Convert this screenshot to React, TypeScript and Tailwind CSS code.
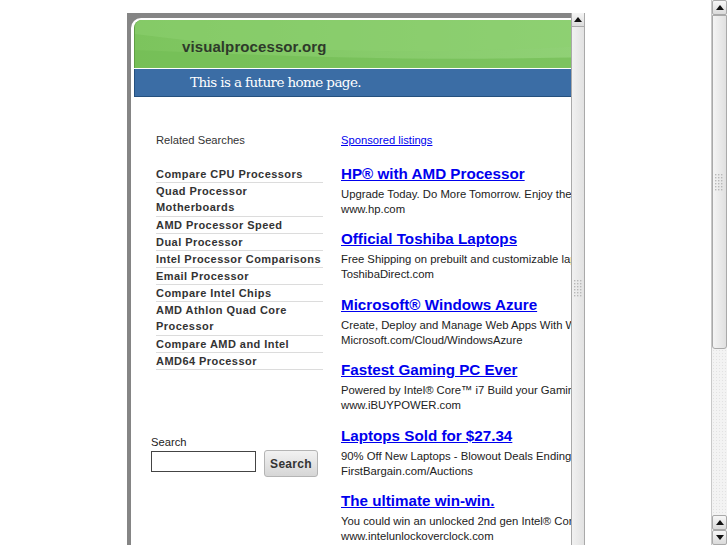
import React from "react";

const related: string[][] = [
  ["Compare CPU Processors"],
  ["Quad Processor", "Motherboards"],
  ["AMD Processor Speed"],
  ["Dual Processor"],
  ["Intel Processor Comparisons"],
  ["Email Processor"],
  ["Compare Intel Chips"],
  ["AMD Athlon Quad Core", "Processor"],
  ["Compare AMD and Intel"],
  ["AMD64 Processor"],
];

const ads = [
  { t: "HP® with AMD Processor", d: "Upgrade Today. Do More Tomorrow. Enjoy the Power of AMD", u: "www.hp.com" },
  { t: "Official Toshiba Laptops", d: "Free Shipping on prebuilt and customizable laptops", u: "ToshibaDirect.com" },
  { t: "Microsoft® Windows Azure", d: "Create, Deploy and Manage Web Apps With Windows Azure", u: "Microsoft.com/Cloud/WindowsAzure" },
  { t: "Fastest Gaming PC Ever", d: "Powered by Intel® Core™ i7 Build your Gaming PC now", u: "www.iBUYPOWER.com" },
  { t: "Laptops Sold for $27.34", d: "90% Off New Laptops - Blowout Deals Ending Soon", u: "FirstBargain.com/Auctions" },
  { t: "The ultimate win-win.", d: "You could win an unlocked 2nd gen Intel® Core™ processor", u: "www.intelunlockoverclock.com" },
];

function Up() {
  return (
    <svg width="8" height="5" viewBox="0 0 8 5">
      <path d="M0 5 L4 0 L8 5 Z" fill="#111" />
    </svg>
  );
}
function Down() {
  return (
    <svg width="8" height="5" viewBox="0 0 8 5">
      <path d="M0 0 L4 5 L8 0 Z" fill="#111" />
    </svg>
  );
}

function Grip({ w }: { w: number }) {
  return (
    <svg width={w} height="18" viewBox={`0 0 ${w} 18`}>
      {Array.from({ length: 6 }).map((_, r) =>
        Array.from({ length: 3 }).map((__, c) => (
          <rect key={`${r}-${c}`} x={c * 3 + 1} y={r * 3 + 1} width="1.4" height="1.4" fill="#b8b8b8" />
        ))
      )}
    </svg>
  );
}

export default function App() {
  return (
    <div
      className="w-[727px] h-[545px] overflow-hidden bg-white flex text-[#333]"
      style={{ fontFamily: '"Liberation Sans", Arial, sans-serif' }}
    >
      <div className="w-[127px] shrink-0" />
      <div className="w-[458px] shrink-0 flex flex-col">
        <div className="h-[13px] shrink-0" />
        <div className="flex flex-1 min-h-0">
          {/* frame content */}
          <div className="w-[444px] h-full overflow-hidden bg-[#858585] pl-[4px] pt-[5px]">
            <div className="w-[560px] h-full bg-white rounded-tl-[10px] pl-[3px] pt-[2px]">
              {/* header */}
              <div className="w-[550px]">
                <div className="relative h-[48px] rounded-tl-[8px] overflow-hidden bg-[#79c35a] border-l border-[#5f9e45]">
                  <svg className="absolute inset-0" width="550" height="48" viewBox="0 0 550 48" preserveAspectRatio="none">
                    <defs>
                      <linearGradient id="g1" x1="0" y1="0" x2="1" y2="0">
                        <stop offset="0" stopColor="#7cc45d" />
                        <stop offset="1" stopColor="#95d47c" />
                      </linearGradient>
                    </defs>
                    <rect width="550" height="48" fill="url(#g1)" />
                    <path d="M0 14 C 120 30, 260 40, 550 20 L550 0 L0 0 Z" fill="#8ccf70" opacity="0.55" />
                    <path d="M0 30 C 150 36, 300 44, 550 34 L550 48 L0 48 Z" fill="#74bd55" opacity="0.7" />
                  </svg>
                  <div className="relative pl-[47px] pt-[17px] text-[15px] leading-[19px] font-bold text-[#2e3a2a] tracking-[0.1px]">
                    visualprocessor.org
                  </div>
                </div>
                <div className="h-[1px] bg-white" />
                <div className="h-[28px] bg-[#3b6da5] border-b border-l border-[#25507e] pl-[55px] pt-[4px]">
                  <div
                    className="text-white leading-[18px]"
                    style={{ fontFamily: '"DejaVu Serif", "Liberation Serif", serif', fontSize: "13.5px", letterSpacing: "-0.6px" }}
                  >
                    This is a future home page.
                  </div>
                </div>
              </div>
              {/* body */}
              <div className="flex pl-[17px] pt-[36px]">
                <div className="w-[172px] shrink-0 flex flex-col">
                  <div className="ml-[5px] text-[11.2px] leading-[14px] text-[#333]">Related Searches</div>
                  <div className="ml-[5px] mt-[19px] flex flex-col">
                    {related.map((lines, i) => (
                      <div
                        key={i}
                        className={`border-b border-[#dcdcdc] text-[11px] font-bold text-[#333] tracking-[0.45px] ${lines.length > 1 ? "pb-[1px]" : ""}`}
                      >
                        {lines.map((l) => (
                          <div key={l} className="leading-[16px] whitespace-nowrap">
                            {l}
                          </div>
                        ))}
                      </div>
                    ))}
                  </div>
                  <div className="mt-[65px] text-[11.2px] leading-[14px] text-[#222]">Search</div>
                  <div className="flex items-start mt-[1px]">
                    <div className="mt-[1px] w-[105px] h-[21px] border border-[#444] bg-white" />
                    <button className="ml-[8px] w-[54px] h-[27px] rounded-[3px] border border-[#b4b4b4] bg-gradient-to-b from-[#f2f2f2] to-[#d6d6d6] text-[12px] font-bold text-[#333] tracking-[0.3px]">
                      Search
                    </button>
                  </div>
                </div>
                <div className="ml-[18px] flex flex-col">
                  <div className="text-[11.2px] leading-[14px] text-[#0000ee] underline whitespace-nowrap">Sponsored listings</div>
                  <div className="mt-[16px] flex flex-col">
                    {ads.map((a) => (
                      <div key={a.t} className="mb-[11.4px]">
                        <div className="text-[15.2px] leading-[22px] font-bold text-[#0000ee] underline whitespace-nowrap">{a.t}</div>
                        <div className="mt-[2px] text-[11.3px] leading-[15px] text-[#222] whitespace-nowrap">{a.d}</div>
                        <div className="text-[11.3px] leading-[15px] text-[#222] whitespace-nowrap">{a.u}</div>
                      </div>
                    ))}
                  </div>
                </div>
              </div>
            </div>
          </div>
          {/* frame scrollbar */}
          <div className="w-[14px] h-full flex flex-col bg-[#e9e9e9] border-x border-[#a9a9a9]">
            <div className="h-[14px] shrink-0 flex items-center justify-center bg-gradient-to-b from-[#f5f5f5] to-[#dcdcdc] border-b border-[#a9a9a9]">
              <Up />
            </div>
            <div className="flex-1 bg-gradient-to-r from-[#f1f1f1] to-[#e2e2e2] flex flex-col items-center">
              <div className="h-[252px]" />
              <Grip w={11} />
            </div>
          </div>
        </div>
      </div>
      <div className="flex-1" />
      {/* page scrollbar */}
      <div className="w-[16px] h-full flex flex-col bg-[#f3f3f3] border-l border-[#c8c8c8]">
        <div className="h-[15px] shrink-0 flex items-center justify-center bg-gradient-to-b from-[#f7f7f7] to-[#dadada] border border-[#a9a9a9] rounded-[2px]">
          <Up />
        </div>
        <div className="h-[334px] shrink-0 bg-gradient-to-r from-[#f4f4f4] to-[#e0e0e0] border border-[#a9a9a9] rounded-b-[3px] flex flex-col items-center">
          <div className="h-[157px]" />
          <Grip w={11} />
        </div>
        <div
          className="flex-1"
          style={{ backgroundImage: "radial-gradient(#e2e2e2 0.6px, transparent 0.7px)", backgroundSize: "3px 3px" }}
        />
        <div className="h-[15px] shrink-0 flex items-center justify-center bg-gradient-to-b from-[#f7f7f7] to-[#dadada] border border-[#a9a9a9] rounded-[2px]">
          <Up />
        </div>
        <div className="h-[15px] shrink-0 flex items-center justify-center bg-gradient-to-b from-[#f7f7f7] to-[#dadada] border border-[#a9a9a9] rounded-[2px]">
          <Down />
        </div>
      </div>
    </div>
  );
}
